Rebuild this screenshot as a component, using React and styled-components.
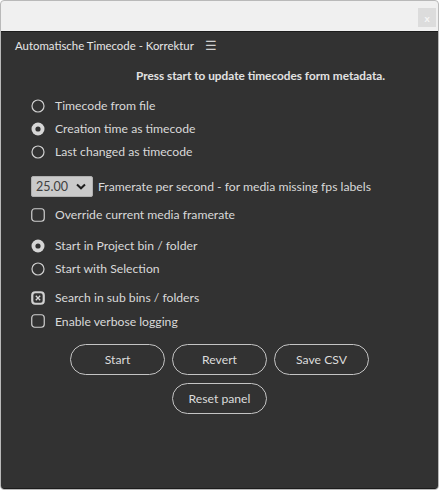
import React from "react"
import styled, { createGlobalStyle } from "styled-components"

const Global = createGlobalStyle`
  html, body {
    margin: 0;
    padding: 0;
    background: #ffffff;
  }
  body {
    font-family: Lato, "Open Sans", sans-serif;
  }
`

const Window = styled.div`
  box-sizing: border-box;
  width: 439px;
  height: 490px;
  display: flex;
  flex-direction: column;
  background: #f0f0f0;
  border: 1px solid #b9b9b9;
  border-radius: 4px;
  overflow: hidden;
`

const TitleBar = styled.div`
  height: 30px;
  display: flex;
  justify-content: flex-end;
  align-items: flex-start;
  padding: 7px 2px 0 0;
  box-sizing: border-box;
`

const CloseButton = styled.div`
  width: 18px;
  height: 19px;
  background: #dcdcdc;
  color: #f6f6f6;
  font-size: 10px;
  font-weight: 700;
  display: flex;
  align-items: center;
  justify-content: center;
`

const Panel = styled.div`
  flex: 1;
  background: #323232;
  border-top: 1px solid #1c1c1c;
  border-bottom: 1px solid #1c1c1c;
  border-radius: 0 0 3px 3px;
  display: flex;
  flex-direction: column;
  color: #d9d9d9;
`

const TabRow = styled.div`
  height: 26px;
  display: flex;
  align-items: center;
  padding: 0 0 0 14px;
  gap: 11px;
  font-size: 11.4px;
  color: #e6e6e6;
`

const Menu = styled.span`
  font-size: 13px;
  color: #cfcfcf;
`

const Content = styled.div`
  display: flex;
  flex-direction: column;
  padding: 9px 0 0 30px;
  font-size: 12.2px;
`

const Heading = styled.div`
  height: 18px;
  line-height: 18px;
  font-size: 11.8px;
  font-weight: 700;
  padding-left: 105px;
  color: #e2e2e2;
`

const Group = styled.div`
  display: flex;
  flex-direction: column;
  margin-top: ${(p) => p.$top}px;
`

const Row = styled.label`
  height: ${(p) => p.$h || 23}px;
  display: flex;
  align-items: center;
  gap: 10px;
`

const Select = styled.div`
  width: 62px;
  height: 21px;
  box-sizing: border-box;
  background: #cacaca;
  border: 1px solid #b0b0b0;
  border-radius: 2px;
  color: #404040;
  display: flex;
  align-items: center;
  justify-content: space-between;
  padding: 0 6px 0 4px;
  font-size: 12.5px;
  margin-right: -5px;
`

const Buttons = styled.div`
  display: flex;
  flex-wrap: wrap;
  justify-content: center;
  gap: 8px 7px;
  width: 299px;
  margin: 11px 0 0 39px;
`

const Button = styled.div`
  box-sizing: border-box;
  width: 95px;
  height: 31px;
  border: 1px solid #c4c4c4;
  border-radius: 16px;
  display: flex;
  align-items: center;
  justify-content: center;
  font-size: 12.2px;
  color: #dcdcdc;
`

const Radio = ({ checked }) => (
  <svg width="14" height="14" viewBox="0 0 14 14">
    {checked ? (
      <>
        <circle cx="7" cy="7" r="6.5" fill="#d6d6d6" />
        <circle cx="7" cy="7" r="2.6" fill="#323232" />
      </>
    ) : (
      <circle cx="7" cy="7" r="6" fill="none" stroke="#d0d0d0" strokeWidth="1.2" />
    )}
  </svg>
)

const Check = ({ checked }) => (
  <svg width="14" height="14" viewBox="0 0 14 14">
    <rect
      x={checked ? 1.25 : 0.75}
      y={checked ? 1.25 : 0.75}
      width={checked ? 11.5 : 12.5}
      height={checked ? 11.5 : 12.5}
      rx="3"
      fill="none"
      stroke="#d0d0d0"
      strokeWidth={checked ? 2.2 : 1.2}
    />
    {checked && <path d="M4.8 4.8 L9.2 9.2 M9.2 4.8 L4.8 9.2" stroke="#d8d8d8" strokeWidth="1.3" />}
  </svg>
)

const Chevron = () => (
  <svg width="10" height="7" viewBox="0 0 10 7">
    <path d="M1 1.5 L5 5.3 L9 1.5" fill="none" stroke="#1e1e1e" strokeWidth="2" />
  </svg>
)

export default function App() {
  return (
    <>
      <Global />
      <Window>
        <TitleBar>
          <CloseButton>x</CloseButton>
        </TitleBar>
        <Panel>
          <TabRow>
            <span>Automatische Timecode - Korrektur</span>
            <Menu>☰</Menu>
          </TabRow>
          <Content>
            <Heading>Press start to update timecodes form metadata.</Heading>
            <Group $top={9}>
              <Row><Radio />Timecode from file</Row>
              <Row><Radio checked />Creation time as timecode</Row>
              <Row><Radio />Last changed as timecode</Row>
            </Group>
            <Group $top={11}>
              <Row $h={24}>
                <Select>
                  <span>25.00</span>
                  <Chevron />
                </Select>
                Framerate per second - for media missing fps labels
              </Row>
              <Row style={{ marginTop: 5 }}><Check />Override current media framerate</Row>
            </Group>
            <Group $top={8}>
              <Row><Radio checked />Start in Project bin / folder</Row>
              <Row><Radio />Start with Selection</Row>
            </Group>
            <Group $top={6}>
              <Row><Check checked />Search in sub bins / folders</Row>
              <Row $h={24}><Check />Enable verbose logging</Row>
            </Group>
            <Buttons>
              <Button>Start</Button>
              <Button>Revert</Button>
              <Button>Save CSV</Button>
              <Button>Reset panel</Button>
            </Buttons>
          </Content>
        </Panel>
      </Window>
    </>
  )
}
